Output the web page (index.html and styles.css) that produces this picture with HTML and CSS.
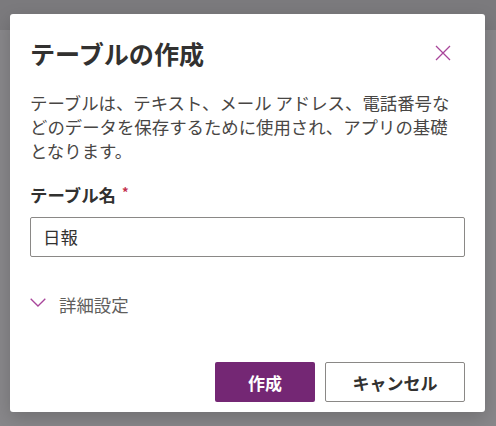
FILE: index.html
```html
<!DOCTYPE html>
<html lang="ja">
<head>
<meta charset="utf-8">
<link rel="stylesheet" href="styles.css">
</head>
<body>
<div class="dialog">
  <div class="header">
    <h1 class="title">テーブルの作成</h1>
    <button class="close" aria-label="閉じる">
      <svg width="16" height="16" viewBox="0 0 16 16"><path d="M1 1 L15 15 M15 1 L1 15" stroke="#a8459a" stroke-width="1.3" fill="none"/></svg>
    </button>
  </div>
  <p class="desc">テーブルは、テキスト、メール アドレス、電話番号な<br>どのデータを保存するために使用され、アプリの基礎<br>となります。</p>
  <div class="label">テーブル名<span class="req">*</span></div>
  <div class="input">日報</div>
  <div class="advanced">
    <svg class="chev" width="16" height="9" viewBox="0 0 16 9"><path d="M0.7 0.7 L8 8 L15.3 0.7" stroke="#a8459a" stroke-width="1.3" fill="none"/></svg>
    <span>詳細設定</span>
  </div>
  <div class="footer">
    <button class="btn primary">作成</button>
    <button class="btn secondary">キャンセル</button>
  </div>
</div>
</body>
</html>
```

FILE: styles.css
```css
html, body {
  margin: 0;
  padding: 0;
}
body {
  width: 496px;
  height: 426px;
  overflow: hidden;
  background: linear-gradient(to bottom, #7b7a7d 0, #7b7a7d 30px, #88878a 30px, #88878a 100%);
  font-family: "Noto Sans CJK JP", "Noto Sans", sans-serif;
  padding-top: 14px;
  padding-left: 10px;
  box-sizing: border-box;
}
.dialog {
  width: 475px;
  height: 398px;
  box-sizing: border-box;
  background: #fff;
  border-radius: 3px;
  box-shadow: 0 6px 18px rgba(0,0,0,0.18);
  padding: 23px 20px 10px 20px;
  display: flex;
  flex-direction: column;
}
.header {
  display: flex;
  align-items: center;
  justify-content: space-between;
  height: 32px;
}
.title {
  margin: 0;
  font-size: 25.1px;
  line-height: 32px;
  font-weight: 700;
  color: #323130;
}
.close {
  border: 0;
  background: none;
  padding: 0;
  width: 16px;
  height: 16px;
  margin-right: 14px;
  display: flex;
}
.desc {
  margin: 22px 0 0 0;
  font-size: 17.4px;
  line-height: 24px;
  color: #484644;
  white-space: nowrap;
}
.label {
  margin-top: 20px;
  font-size: 17.4px;
  line-height: 24px;
  font-weight: 700;
  color: #323130;
}
.req {
  color: #c4314b;
  font-size: 13px;
  line-height: 13px;
  vertical-align: top;
  margin-left: 6px;
  position: relative;
  top: 2px;
}
.input {
  margin-top: 10px;
  height: 40px;
  box-sizing: border-box;
  border: 1px solid #8a8886;
  border-radius: 2px;
  padding: 0 12px;
  font-size: 17.4px;
  line-height: 38px;
  color: #323130;
}
.advanced {
  margin-top: 36px;
  display: flex;
  align-items: center;
  gap: 13px;
  font-size: 17.4px;
  line-height: 24px;
  color: #605e5c;
  height: 24px;
}
.chev {
  margin-top: -5px;
}
.footer {
  margin-top: auto;
  display: flex;
  justify-content: flex-end;
  gap: 10px;
}
.btn {
  height: 40px;
  box-sizing: border-box;
  border-radius: 2px;
  font-family: "Noto Sans CJK JP", "Noto Sans", sans-serif;
  font-size: 17px;
  font-weight: 700;
  padding: 0;
}
.primary {
  width: 100px;
  background: #742774;
  color: #fff;
  border: 0;
}
.secondary {
  width: 140px;
  background: #fff;
  color: #323130;
  border: 1px solid #8a8886;
}
```
